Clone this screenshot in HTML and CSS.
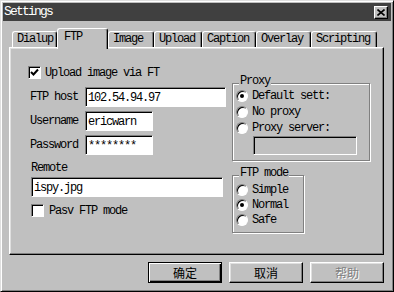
FILE: index.html
```html
<!DOCTYPE html>
<html lang="en">
<head>
    <meta charset="UTF-8">
    <meta name="viewport" content="width=device-width, initial-scale=1.0">
    <title>Settings</title>
    <link rel="stylesheet" href="styles.css">
</head>
<body>

    <div class="window">

        <!-- Barre de titre -->
        <div class="titlebar">
            <span class="title">Settings</span>
            <span class="close">
                <svg width="8" height="7" viewBox="0 0 8 7"><path d="M0.5 0.5 L7.5 6.5 M7.5 0.5 L0.5 6.5" stroke="#000" stroke-width="1.6" fill="none"/></svg>
            </span>
        </div>

        <!-- Onglets -->
        <div class="tabs">
            <div class="tab tab-dialup">Dialup</div>
            <div class="tab tab-ftp active">FTP</div>
            <div class="tab tab-image">Image</div>
            <div class="tab tab-upload">Upload</div>
            <div class="tab tab-caption">Caption</div>
            <div class="tab tab-overlay">Overlay</div>
            <div class="tab tab-scripting">Scripting</div>
        </div>

        <div class="panel">
            <div class="left-col">
                <div class="check-row">
                    <span class="checkbox">
                        <svg width="9" height="9" viewBox="0 0 9 9"><path d="M1 4 L3.5 6.5 L8 1.5" stroke="#000" stroke-width="2" fill="none"/></svg>
                    </span>
                    <span class="check-label">Upload image via FT</span>
                </div>

                <div class="field-row first">
                    <span class="field-label">FTP host</span>
                    <div class="field field-wide">102.54.94.97</div>
                </div>
                <div class="field-row">
                    <span class="field-label">Username</span>
                    <div class="field field-short">ericwarn</div>
                </div>
                <div class="field-row">
                    <span class="field-label">Password</span>
                    <div class="field field-short">********</div>
                </div>

                <div class="remote-label">Remote</div>
                <div class="field field-remote">ispy.jpg</div>

                <div class="check-row pasv">
                    <span class="checkbox"></span>
                    <span class="check-label">Pasv FTP mode</span>
                </div>
            </div>

            <div class="right-col">
                <div class="group group-proxy">
                    <span class="group-title">Proxy</span>
                    <div class="radio-row"><span class="radio checked"></span><span>Default sett:</span></div>
                    <div class="radio-row"><span class="radio"></span><span>No proxy</span></div>
                    <div class="radio-row"><span class="radio"></span><span>Proxy server:</span></div>
                    <div class="field field-disabled"></div>
                </div>

                <div class="group group-mode">
                    <span class="group-title">FTP mode</span>
                    <div class="radio-row"><span class="radio"></span><span>Simple</span></div>
                    <div class="radio-row"><span class="radio checked"></span><span>Normal</span></div>
                    <div class="radio-row"><span class="radio"></span><span>Safe</span></div>
                </div>
            </div>
        </div>

        <!-- Boutons -->
        <div class="buttons">
            <button class="btn btn-default">确定</button>
            <button class="btn">取消</button>
            <button class="btn" disabled>帮助</button>
        </div>

    </div>

</body>
</html>
```

FILE: styles.css
```css
body {
    margin: 0;
    background-color: #c0c0c0;
    color: #000;
    font-family: "Liberation Mono", monospace;
    font-size: 12px;
    line-height: 12px;
    letter-spacing: -1.2px;
}

.window {
    width: 394px;
    height: 292px;
    box-sizing: border-box;
    border: 1px solid;
    border-color: #dfdfdf #000 #000 #dfdfdf;
    box-shadow: inset 1px 1px #fff, inset -1px -1px #808080;
    padding: 2px;
}

/* Barre de titre */
.titlebar {
    height: 18px;
    background-color: #404040;
    color: #fff;
    display: flex;
    align-items: center;
    justify-content: space-between;
    padding: 0 3px 0 1px;
}

.title { font-size: 13px; letter-spacing: -1.8px; }

.close {
    width: 14px;
    height: 13px;
    box-sizing: border-box;
    background-color: #c0c0c0;
    border: 1px solid;
    border-color: #fff #000 #000 #fff;
    box-shadow: inset -1px -1px #808080;
    display: flex;
    justify-content: center;
    align-items: center;
}

/* Onglets */
.tabs {
    height: 26px;
    display: flex;
    align-items: flex-end;
    padding-left: 9px;
    position: relative;
    z-index: 1;
}

.tab {
    height: 16px;
    box-sizing: border-box;
    line-height: 15px;
    padding-left: 4px;
    background-color: #c0c0c0;
    border-top: 1px solid #fff;
    border-left: 1px solid #fff;
    border-right: 1px solid #000;
    box-shadow: inset -1px 0 #808080;
    border-radius: 3px 3px 0 0;
}

.tab.active {
    height: 21px;
    margin-bottom: -2px;
    line-height: 16px;
    padding-left: 6px;
}

.tab-dialup { width: 45px; }
.tab-ftp { width: 51px; }
.tab-image { width: 46px; }
.tab-upload { width: 48px; }
.tab-caption { width: 54px; }
.tab-overlay { width: 55px; }
.tab-scripting { width: 66px; }

/* Panneau */
.panel {
    margin-left: 6px;
    width: 375px;
    height: 208px;
    box-sizing: border-box;
    border: 1px solid;
    border-color: #fff #000 #000 #fff;
    box-shadow: inset -1px -1px #808080, inset 1px 1px #dfdfdf;
    display: flex;
    align-items: flex-start;
    padding: 18px 0 0 18px;
}

.left-col {
    width: 198px;
    display: flex;
    flex-direction: column;
}

.right-col {
    margin-left: 6px;
    margin-top: 17px;
    width: 138px;
    display: flex;
    flex-direction: column;
    align-items: flex-start;
}

.check-row {
    height: 13px;
    display: flex;
    align-items: center;
}

.check-row.pasv { margin: 7px 0 0 3px; }

.checkbox {
    width: 13px;
    height: 13px;
    box-sizing: border-box;
    background-color: #fff;
    border: 1px solid;
    border-color: #808080 #fff #fff #808080;
    box-shadow: inset 1px 1px #000;
    display: flex;
    justify-content: center;
    align-items: center;
    flex-shrink: 0;
}

.check-label { margin-left: 4px; white-space: nowrap; }
.pasv .check-label { margin-left: 5px; }

.field-row {
    height: 20px;
    display: flex;
    align-items: center;
    margin-top: 4px;
}

.field-row.first { margin-top: 8px; }

.field-label { width: 55px; margin-left: 2px; }

.field {
    height: 20px;
    box-sizing: border-box;
    background-color: #fff;
    border: 1px solid;
    border-color: #808080 #fff #fff #808080;
    box-shadow: inset 1px 1px #000;
    padding: 1px 0 0 2px;
    display: flex;
    align-items: center;
    white-space: nowrap;
}

.field-wide { width: 141px; }
.field-short { width: 68px; }

.remote-label { margin: 7px 0 0 3px; }

.field-remote {
    margin: 3px 0 0 3px;
    width: 192px;
}

/* Groupes */
.group {
    box-sizing: border-box;
    border: 1px solid #808080;
    box-shadow: inset 1px 1px #fff, 1px 1px #fff;
    padding: 0 0 5px 3px;
    display: flex;
    flex-direction: column;
    align-items: flex-start;
}

.group-proxy { width: 138px; }
.group-mode { width: 72px; margin-top: 14px; padding-bottom: 6px; }

.group-title {
    margin: -9px 0 0 3px;
    padding: 0 1px;
    background-color: #c0c0c0;
}

.radio-row {
    height: 12px;
    display: flex;
    align-items: center;
    gap: 4px;
    margin-top: 4px;
    white-space: nowrap;
}

.group-proxy .group-title + .radio-row { margin-top: 3px; }
.group-mode .radio-row { margin-top: 3px; }
.group-mode .group-title + .radio-row { margin-top: 5px; }

.radio {
    width: 12px;
    height: 12px;
    box-sizing: border-box;
    border-radius: 50%;
    background-color: #fff;
    border: 1px solid;
    border-color: #808080 #fff #fff #808080;
    box-shadow: inset 1px 1px #000;
    display: flex;
    justify-content: center;
    align-items: center;
}

.radio.checked::after {
    content: "";
    width: 4px;
    height: 4px;
    border-radius: 50%;
    background-color: #000;
}

.field-disabled {
    margin: 2px 0 0 17px;
    width: 104px;
    height: 19px;
    background-color: #c0c0c0;
}

/* Boutons */
.buttons {
    margin-top: 7px;
    padding-right: 7px;
    display: flex;
    justify-content: flex-end;
    gap: 7px;
}

.btn {
    width: 74px;
    height: 21px;
    padding: 0;
    box-sizing: border-box;
    background-color: #c0c0c0;
    border: 1px solid;
    border-color: #fff #000 #000 #fff;
    box-shadow: inset -1px -1px #808080, inset 1px 1px #dfdfdf;
    font-family: "Noto Sans CJK SC", sans-serif;
    font-size: 12px;
    letter-spacing: 0;
    color: #000;
}

.btn-default {
    border-color: #000;
    box-shadow: inset 1px 1px #fff, inset -1px -1px #000, inset -2px -2px #808080;
}

.btn:disabled {
    color: #808080;
    text-shadow: 1px 1px #fff;
}
```
